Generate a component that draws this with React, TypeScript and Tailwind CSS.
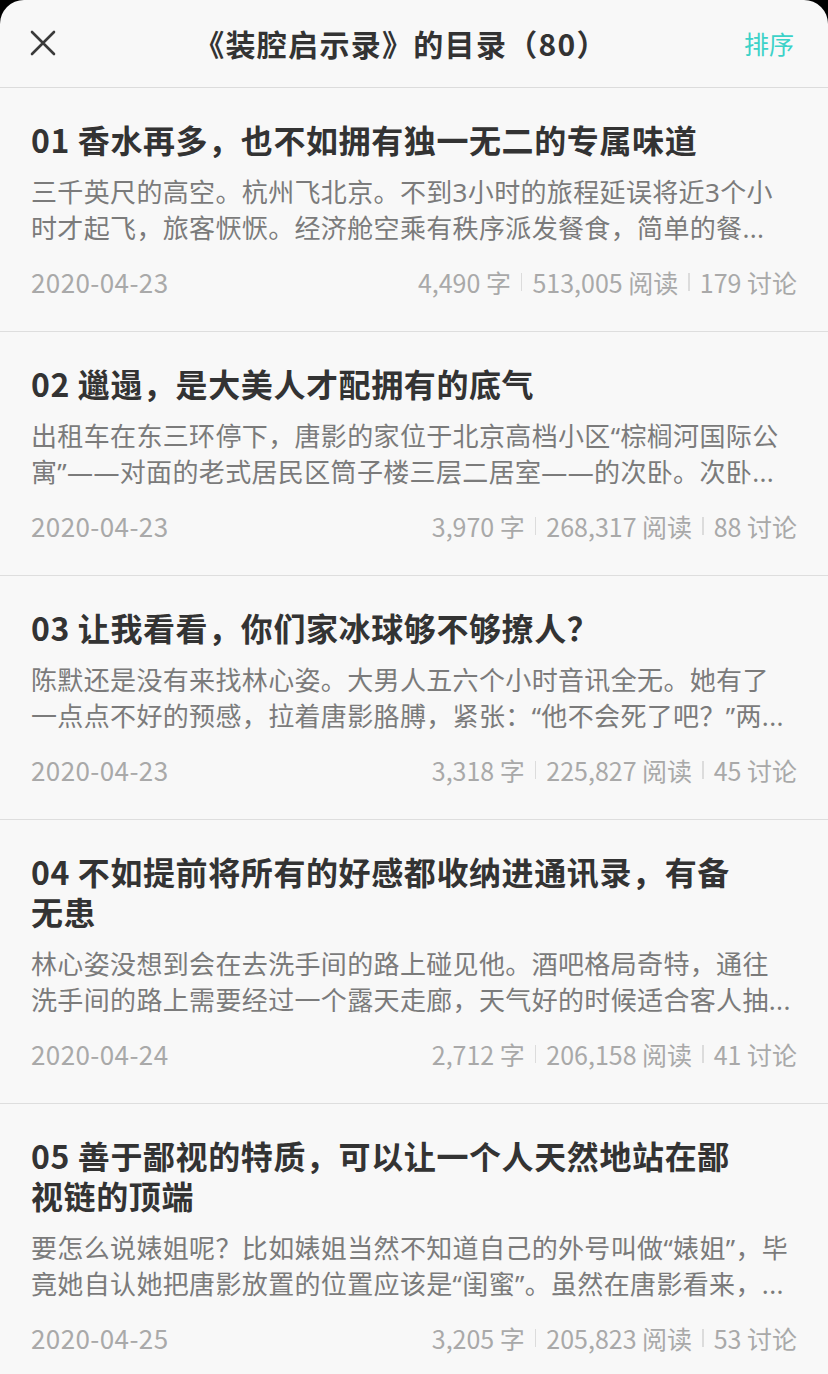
import React from "react";

type Item = {
  title: string[];
  summary: [string, string];
  date: string;
  words: string;
  reads: string;
  comments: string;
};

const items: Item[] = [
  {
    title: ["01 香水再多，也不如拥有独一无二的专属味道"],
    summary: [
      "三千英尺的高空。杭州飞北京。不到3小时的旅程延误将近3个小",
      "时才起飞，旅客恹恹。经济舱空乘有秩序派发餐食，简单的餐...",
    ],
    date: "2020-04-23",
    words: "4,490",
    reads: "513,005",
    comments: "179",
  },
  {
    title: ["02 邋遢，是大美人才配拥有的底气"],
    summary: [
      "出租车在东三环停下，唐影的家位于北京高档小区“棕榈河国际公",
      "寓”——对面的老式居民区筒子楼三层二居室——的次卧。次卧...",
    ],
    date: "2020-04-23",
    words: "3,970",
    reads: "268,317",
    comments: "88",
  },
  {
    title: ["03 让我看看，你们家冰球够不够撩人？"],
    summary: [
      "陈默还是没有来找林心姿。大男人五六个小时音讯全无。她有了",
      "一点点不好的预感，拉着唐影胳膊，紧张：“他不会死了吧？”两...",
    ],
    date: "2020-04-23",
    words: "3,318",
    reads: "225,827",
    comments: "45",
  },
  {
    title: ["04 不如提前将所有的好感都收纳进通讯录，有备", "无患"],
    summary: [
      "林心姿没想到会在去洗手间的路上碰见他。酒吧格局奇特，通往",
      "洗手间的路上需要经过一个露天走廊，天气好的时候适合客人抽...",
    ],
    date: "2020-04-24",
    words: "2,712",
    reads: "206,158",
    comments: "41",
  },
  {
    title: ["05 善于鄙视的特质，可以让一个人天然地站在鄙", "视链的顶端"],
    summary: [
      "要怎么说婊姐呢？比如婊姐当然不知道自己的外号叫做“婊姐”，毕",
      "竟她自认她把唐影放置的位置应该是“闺蜜”。虽然在唐影看来，...",
    ],
    date: "2020-04-25",
    words: "3,205",
    reads: "205,823",
    comments: "53",
  },
];

const cjk = {
  fontFamily: '"Noto Sans CJK SC", "Noto Sans", sans-serif',
};
const latinFirst = {
  fontFamily: '"Noto Sans", "Noto Sans CJK SC", sans-serif',
};

function Sep() {
  return <span className="mx-[10px] inline-block h-[18px] w-[1.5px] shrink-0 bg-[#dcdcdc]" />;
}

function Row({ item }: { item: Item }) {
  return (
    <div className="border-b border-[#dedede] px-[31px] pt-[31px] pb-[31px]">
      <div className="text-[32px] font-bold leading-[40px] tracking-[0.6px] text-[#333333]">
        {item.title.map((t, i) => (
          <div key={i} className="whitespace-nowrap">
            {t}
          </div>
        ))}
      </div>
      <div
        className="mt-[15px] text-[26px] leading-[36px] tracking-[0.35px] text-[#7b7b7b]"
        style={latinFirst}
      >
        {item.summary.map((s, i) => (
          <div key={i} className="overflow-hidden whitespace-nowrap">
            {s}
          </div>
        ))}
      </div>
      <div className="mt-[18px] flex h-[36px] items-center justify-between text-[26px] leading-[36px] text-[#a9a9a9]">
        <span className="tracking-[0.4px]">{item.date}</span>
        <span className="flex items-center text-[25px]">
          <span>{item.words} 字</span>
          <Sep />
          <span>{item.reads} 阅读</span>
          <Sep />
          <span>{item.comments} 讨论</span>
        </span>
      </div>
    </div>
  );
}

export default function App() {
  return (
    <div className="min-h-[1374px] w-[828px] bg-black" style={cjk}>
      <div className="min-h-[1374px] overflow-hidden rounded-t-[24px] bg-[#f8f8f8]">
        <div className="flex h-[88px] items-center justify-between border-b border-[#dcdcdc] px-[30px] pb-[2px]">
          <svg width="26" height="26" viewBox="0 0 26 26" className="shrink-0">
            <path
              d="M2 2 L24 24 M24 2 L2 24"
              stroke="#3a3a3a"
              strokeWidth="2.6"
              strokeLinecap="round"
            />
          </svg>
          <div className="pl-[2px] text-[30px] font-bold leading-[40px] tracking-[1.3px] text-[#333333]">
            《装腔启示录》的目录（80）
          </div>
          <div className="pr-[4px] text-[25px] leading-[36px] text-[#3cd2c8]">排序</div>
        </div>
        {items.map((it, i) => (
          <Row key={i} item={it} />
        ))}
      </div>
    </div>
  );
}
